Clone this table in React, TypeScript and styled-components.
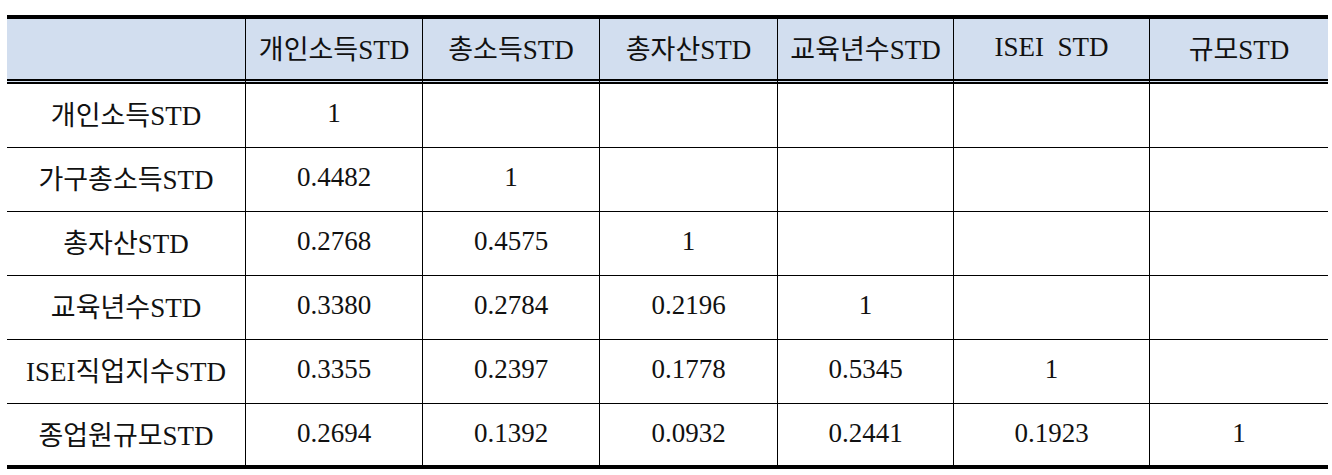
import React from "react";
import styled, { createGlobalStyle, css } from "styled-components";

const GlobalStyle = createGlobalStyle`
  html, body {
    margin: 0;
    padding: 0;
    background: #ffffff;
  }
  body {
    font-family: "Liberation Serif", "Noto Sans CJK KR", serif;
  }
`;

const Page = styled.div`
  padding: 15px 0 0 7px;
`;

const Grid = styled.div`
  display: grid;
  grid-template-columns: 239px 177px 177px 178px 176px 196px 178px;
  width: 1321px;
  border-top: 4px solid #000;
  border-bottom: 4px solid #000;
`;

const Cell = styled.div<{ $head?: boolean; $last?: boolean; $lastRow?: boolean }>`
  box-sizing: border-box;
  display: flex;
  align-items: center;
  justify-content: center;
  height: 64px;
  border-right: ${({ $last }) => ($last ? "none" : "1px solid #000")};
  border-bottom: 1px solid #000;
  font-size: 27px;
  color: #111;
  white-space: pre;
  padding-bottom: 5px;
  ${({ $head }) =>
    $head &&
    css`
      height: 65px;
      background: #d2deef;
      border-bottom: 5px double #000;
      padding-bottom: 4px;
    `}
  ${({ $lastRow }) =>
    $lastRow &&
    css`
      height: 61px;
      border-bottom: none;
      padding-bottom: 2px;
    `}
`;

const headers = ["", "개인소득STD", "총소득STD", "총자산STD", "교육년수STD", "ISEI  STD", "규모STD"];

const rows: { label: string; values: string[] }[] = [
  { label: "개인소득STD", values: ["1"] },
  { label: "가구총소득STD", values: ["0.4482", "1"] },
  { label: "총자산STD", values: ["0.2768", "0.4575", "1"] },
  { label: "교육년수STD", values: ["0.3380", "0.2784", "0.2196", "1"] },
  { label: "ISEI직업지수STD", values: ["0.3355", "0.2397", "0.1778", "0.5345", "1"] },
  { label: "종업원규모STD", values: ["0.2694", "0.1392", "0.0932", "0.2441", "0.1923", "1"] },
];

export default function App() {
  return (
    <Page>
      <GlobalStyle />
      <Grid>
        {headers.map((h, i) => (
          <Cell key={"h" + i} $head $last={i === headers.length - 1}>
            {h}
          </Cell>
        ))}
        {rows.map((row, r) => {
          const lastRow = r === rows.length - 1;
          return (
            <React.Fragment key={row.label}>
              <Cell $lastRow={lastRow}>{row.label}</Cell>
              {Array.from({ length: 6 }).map((_, c) => (
                <Cell key={c} $lastRow={lastRow} $last={c === 5}>
                  {row.values[c] ?? ""}
                </Cell>
              ))}
            </React.Fragment>
          );
        })}
      </Grid>
    </Page>
  );
}
